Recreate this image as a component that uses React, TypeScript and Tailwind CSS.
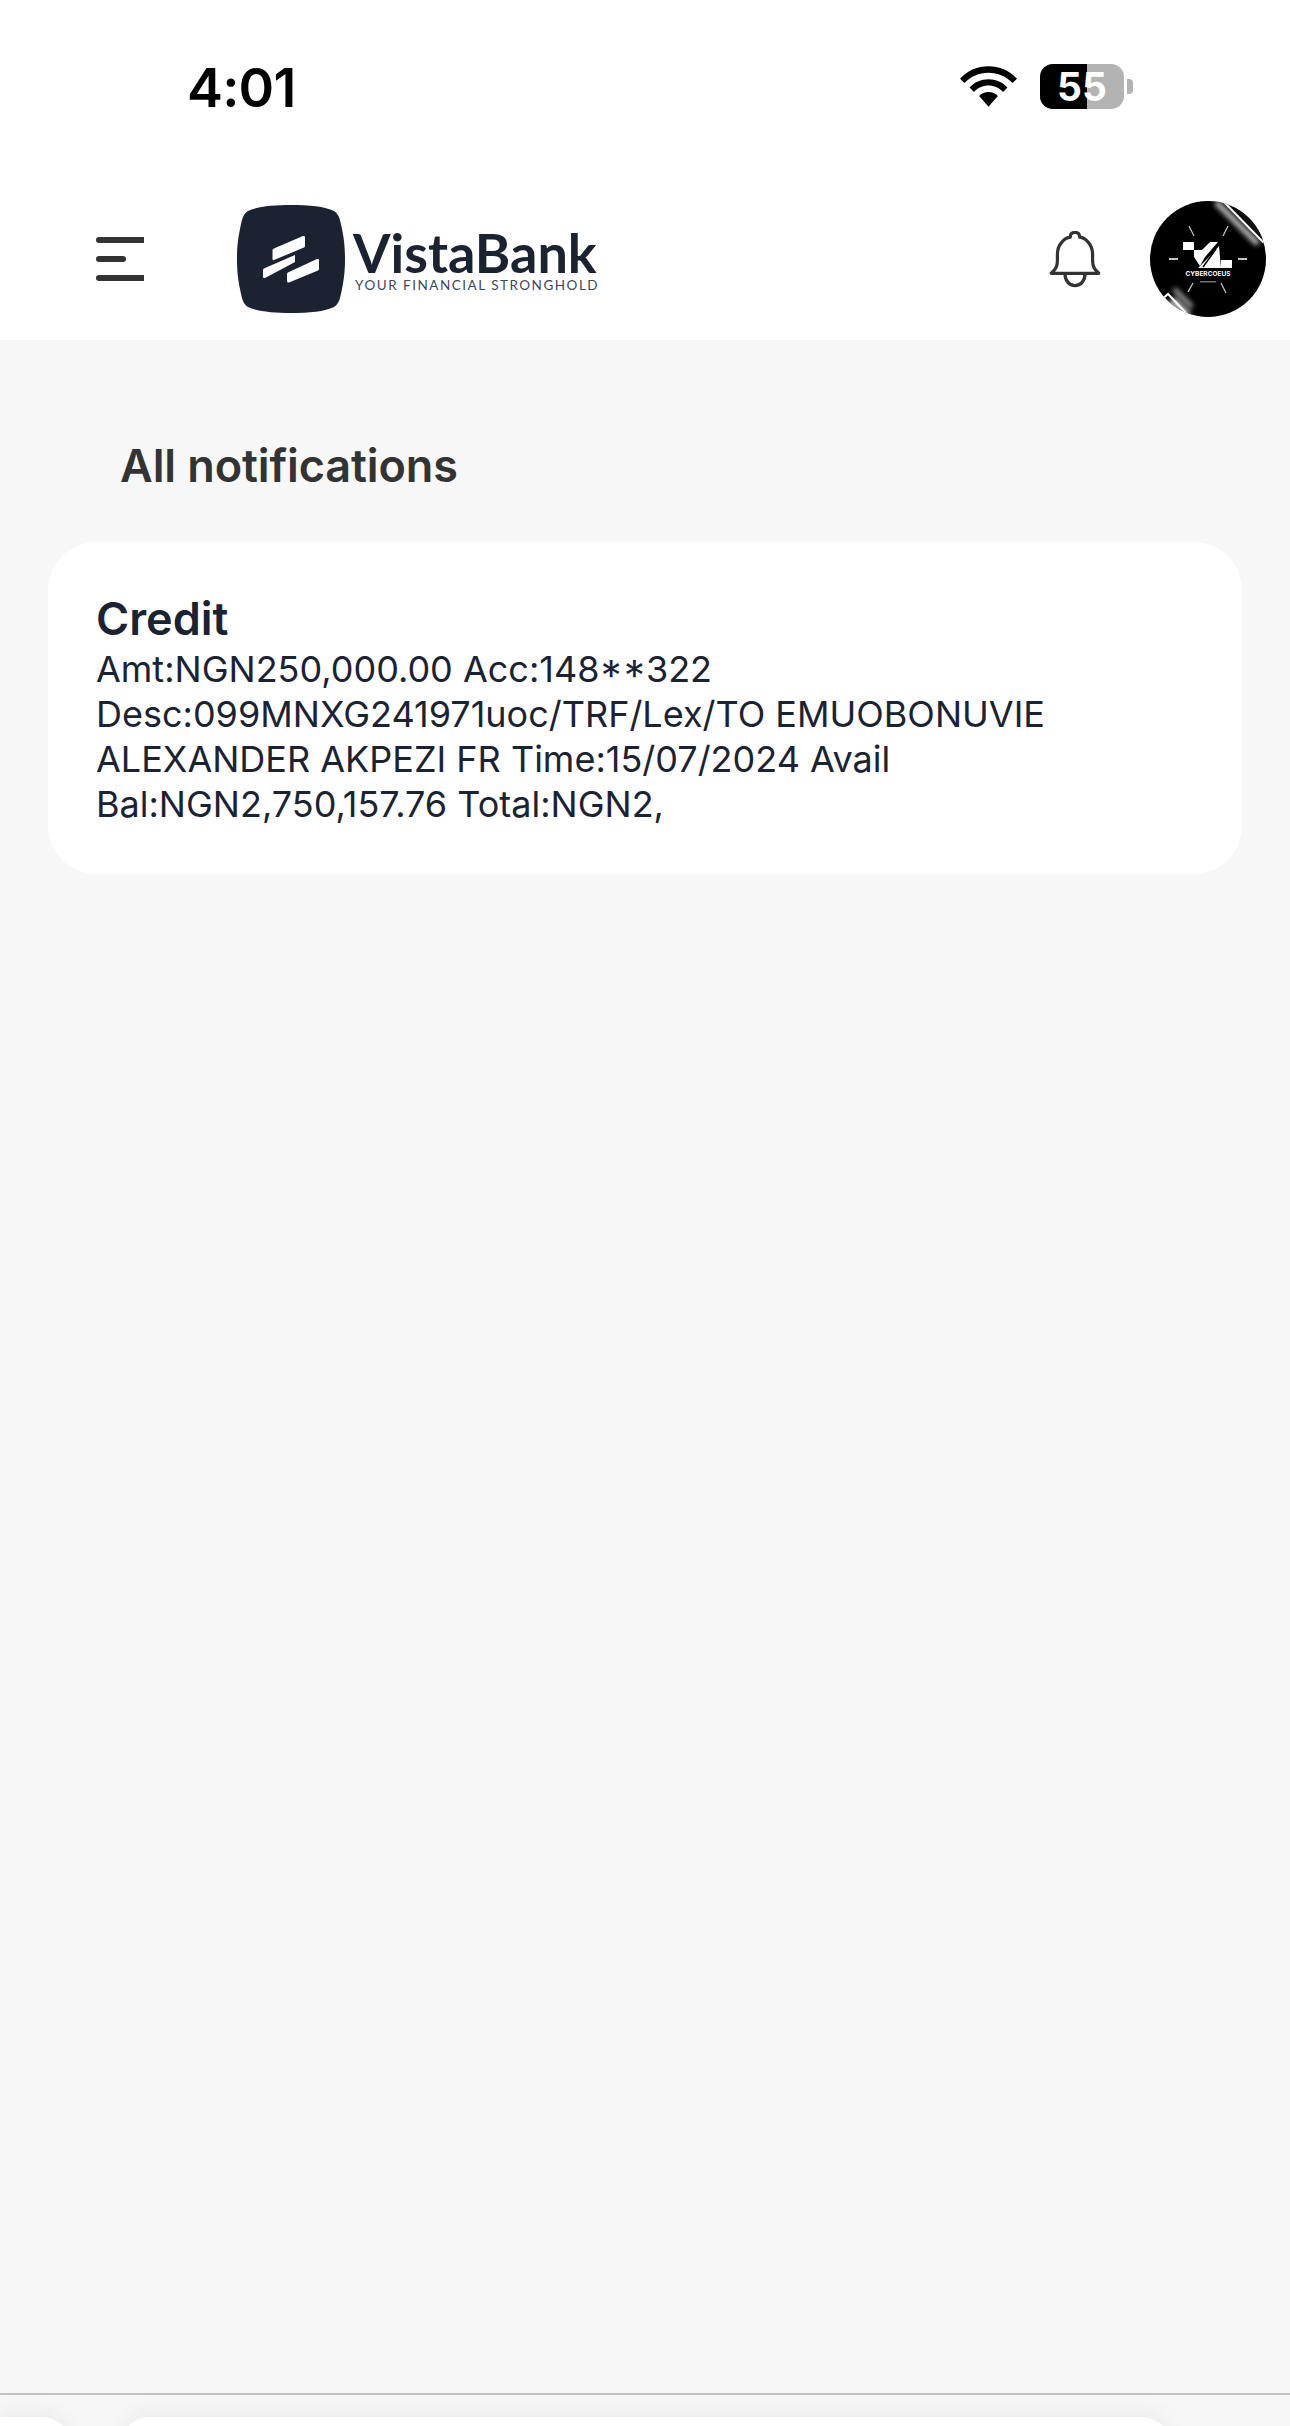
import React from "react";

const inter = { fontFamily: "Inter, 'Liberation Sans', sans-serif" };

function Wifi() {
  return (
    <svg width="57" height="42" viewBox="0 0 58 42" fill="#000">
      <path d="M29 0C18 0 8 4.200 0 12.500L4.500 17C10.800 10.200 19.500 6.500 29 6.500S47.200 10.200 53.500 17L58 12.500C50 4.200 40 0 29 0Z" />
      <path d="M29 13C21.500 13 14.600 16 9.700 21.500L14.200 26C18 21.800 23.300 19.500 29 19.500S40 21.800 43.800 26L48.300 21.500C43.400 16 36.500 13 29 13Z" />
      <path d="M29 26C25.300 26 21.900 27.500 19.500 30.200L29 41L38.500 30.200C36.100 27.500 32.700 26 29 26Z" />
    </svg>
  );
}

function Battery() {
  return (
    <div className="flex items-center">
      <div className="relative flex h-[45px] w-[84px] items-center justify-center overflow-hidden rounded-[13px] bg-[#b3b3b3]">
        <div className="absolute inset-y-0 left-0 w-[47px] bg-black" />
        <span className="relative text-[39px] font-bold leading-none text-white">55</span>
      </div>
      <div className="ml-[3px] h-[15px] w-[6px] rounded-r-[4px] bg-[#b3b3b3]" />
    </div>
  );
}

function VistaMark() {
  return (
    <svg width="108" height="108" viewBox="0 0 108 108">
      <path d="M54 0C72 0 88 1.500 97 6C102 9 103 14 105 24C107.500 36 108 45 108 54S107.500 72 105 84C103 94 102 99 97 102C88 106.500 72 108 54 108S20 106.500 11 102C6 99 5 94 3 84C.5 72 0 63 0 54S.5 36 3 24C5 14 6 9 11 6C20 1.500 36 0 54 0Z" fill="#1b2333" />
      <g fill="#fff">
        <path d="M38 43L66 31Q68 30.500 68 32V41Q68 42 67 42.500L37 55Q35.500 55.500 35.500 54V45Q35.500 44 38 43Z" />
        <path d="M28 63L58 50V57L28 73Q26 73.500 26 72V65Q26 63.500 28 63Z" />
        <path d="M52 67L80 54Q82 53.500 82 55V64Q82 65 81 65.500L52 77.500Q50 78 50 76V69Q50 67.500 52 67Z" />
      </g>
    </svg>
  );
}

function Bell() {
  return (
    <svg width="52" height="57" viewBox="0 0 54 60" fill="none" stroke="#333" strokeWidth="3.400" strokeLinejoin="round" strokeLinecap="round">
      <path d="M2 44.500H52C47.500 40.500 45.500 37.500 45.500 31V24C45.500 14 37.500 7 32 6.500C32 3 30 1.500 27 1.500S22 3 22 6.500C16.500 7 8.500 14 8.500 24V31C8.500 37.500 6.500 40.500 2 44.500Z" />
      <path d="M16.500 45C16.500 52.500 21 57.500 27 57.500S37.500 52.500 37.500 45" />
    </svg>
  );
}

function Avatar() {
  return (
    <div className="relative h-[116px] w-[116px] overflow-hidden rounded-full bg-black">
      <svg className="absolute inset-0" width="116" height="116" viewBox="0 0 116 116">
        <defs>
          <filter id="soft" x="-40%" y="-40%" width="180%" height="180%">
            <feGaussianBlur stdDeviation="2.500" />
          </filter>
        </defs>
        {/* peeled sticker corners */}
        <path d="M66 1L108 43" stroke="#bbb" strokeWidth="6" fill="none" filter="url(#soft)" />
        <path d="M74 1L113 41L120 37" stroke="#fff" strokeWidth="2" fill="none" />
        <path d="M76 -2L120 -2L120 36L113 39Z" fill="#111" />
        <path d="M24 88L42 106" stroke="#999" strokeWidth="5" fill="none" filter="url(#soft)" />
        <path d="M16 102L26 96L42 112L30 118Z" fill="#a8a8a8" filter="url(#soft)" />
        <path d="M8 102L18 93L37 113" stroke="#fff" strokeWidth="2" fill="none" />
        {/* sun rays */}
        <g stroke="#c4c4c4" strokeWidth="1.300">
          <path d="M19 58H28" strokeWidth="2" />
          <path d="M88 58H97" strokeWidth="2" />
          <path d="M39 25L44 35" />
          <path d="M78 25L73 35" />
          <path d="M38 91L43 82" />
          <path d="M76 92L71 82" />
        </g>
        {/* emblem */}
        <g fill="#fff">
          <rect x="33" y="41" width="11" height="8" />
          <path d="M44 49H52L60 41H68L55 56L50 65L44 56Z" />
          <path d="M69 45L71 67H48L62 53Z" />
          <rect x="71" y="59" width="11" height="8" />
        </g>
        <path d="M66 48L53 66" stroke="#000" strokeWidth="1.500" />
        <rect x="50" y="80" width="16" height="1.500" fill="#777" />
      </svg>
      <div className="absolute inset-x-0 top-[69px] text-center text-[6.500px] font-bold leading-[9px] text-white">CYBERCOEUS</div>
    </div>
  );
}

export default function App() {
  return (
    <div className="relative flex h-[2426px] w-[1290px] flex-col overflow-hidden bg-[#f7f7f7]" style={inter}>
      <header className="bg-white">
        <div className="flex h-[178px] items-start justify-between pl-[187px] pr-[157px] pt-[56px]">
          <span className="text-[54px] font-semibold leading-[64px] tracking-[-0.8px] text-black">4:01</span>
          <div className="flex items-center gap-[23px] pt-[8px]">
            <Wifi />
            <Battery />
          </div>
        </div>
        <div className="flex h-[162px] items-center pl-[96px] pr-[24px]">
          <div className="flex w-[48px] flex-col gap-[13px]">
            <div className="h-[6px] w-[48px] rounded-l-full bg-[#333]" />
            <div className="h-[6px] w-[30px] rounded-full bg-[#333]" />
            <div className="h-[6px] w-[48px] rounded-l-full bg-[#333]" />
          </div>
          <div className="ml-[93px] flex items-center gap-[8px]">
            <VistaMark />
            <div className="flex flex-col pt-[4px]" style={{ fontFamily: "Lato, sans-serif" }}>
              <span className="text-[54px] font-bold leading-[46px] text-[#1b2333]">VistaBank</span>
              <span className="mt-[2px] whitespace-nowrap pl-[2px] text-[13.500px] leading-[14px] tracking-[1.500px] text-[#3f4756]">YOUR FINANCIAL STRONGHOLD</span>
            </div>
          </div>
          <div className="ml-auto flex items-center gap-[49px]">
            <Bell />
            <Avatar />
          </div>
        </div>
      </header>

      <main className="flex-1 px-[48px]">
        <h1 className="pl-[72px] pt-[99px] text-[45px] font-semibold leading-[54px] tracking-[-0.1px] text-[#333]">All notifications</h1>
        <section className="mt-[49px] rounded-[48px] bg-white px-[48px] pb-[47px] pt-[50px] text-[#1b2333]">
          <h2 className="text-[45px] font-semibold leading-[54px]">Credit</h2>
          <div className="mt-[1px] text-[36px] leading-[45px]">
            <p className="h-[45px]">
              Amt:NGN250,000.00 Acc:148
              <span className="[font-feature-settings:'case']">**</span>
              322
            </p>
            <p className="h-[45px]">Desc:099MNXG241971uoc/TRF/Lex/TO EMUOBONUVIE</p>
            <p className="h-[45px]">ALEXANDER AKPEZI FR Time:15/07/2024 Avail</p>
            <p className="h-[45px]">Bal:NGN2,750,157.76 Total:NGN2,</p>
          </div>
        </section>
      </main>

      <footer className="h-[33px] overflow-hidden border-t-2 border-[#c2c2c2] bg-[#f7f7f7]">
        <div className="flex pt-[22px]">
          <div className="h-[30px] w-[70px] rounded-tr-[28px] bg-white shadow-[0_-6px_22px_rgba(0,0,0,0.05)]" />
          <div className="ml-[51px] h-[30px] w-[1049px] rounded-t-[28px] bg-white shadow-[0_-6px_22px_rgba(0,0,0,0.05)]" />
        </div>
      </footer>
    </div>
  );
}
